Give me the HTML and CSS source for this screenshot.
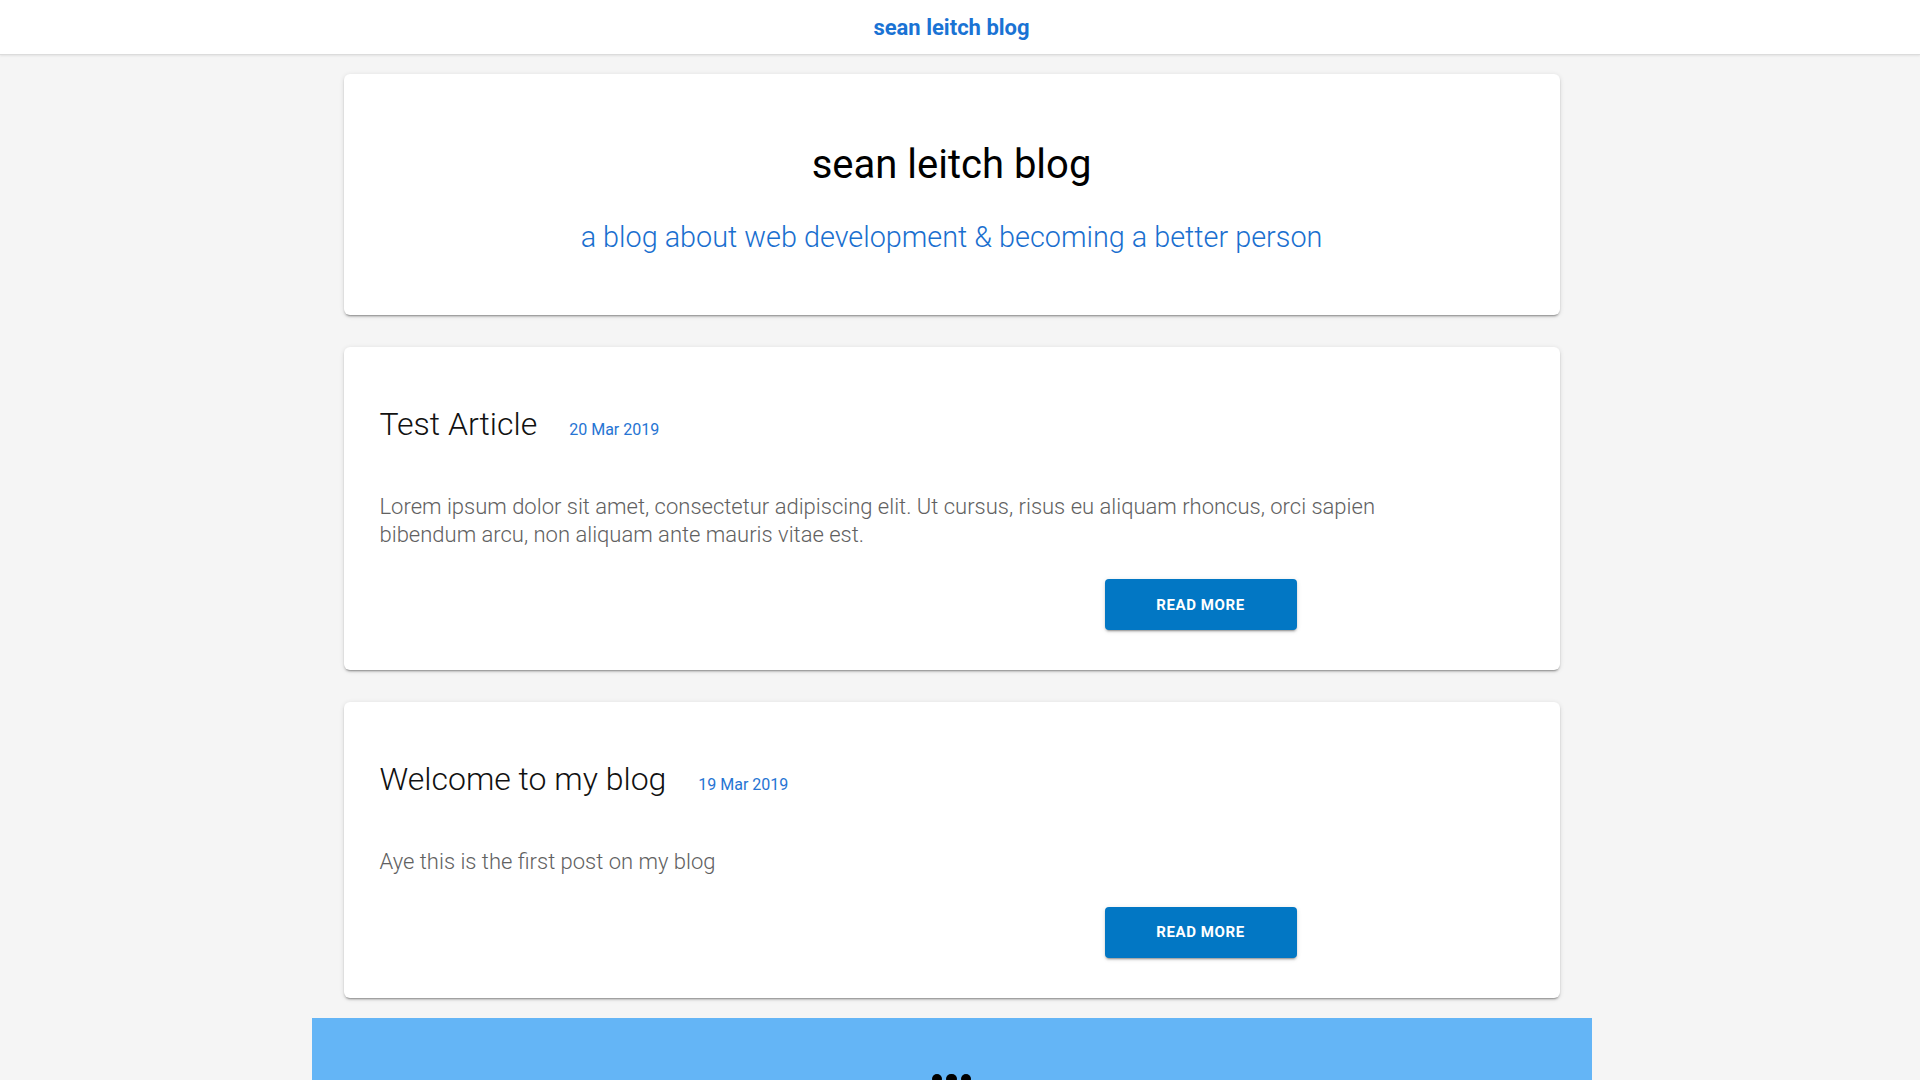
FILE: index.html
```html
<!DOCTYPE html>
<html lang="en">
<head>
<meta charset="utf-8">
<title>sean leitch blog</title>
<link rel="stylesheet" href="styles.css">
</head>
<body>
<header class="topbar">
  <a class="topbar-title" href="#">sean leitch blog</a>
</header>
<main class="content">
  <section class="card hero">
    <h1 class="hero-title">sean leitch blog</h1>
    <p class="hero-sub">a blog about web development &amp; becoming a better person</p>
  </section>
  <article class="card post">
    <div class="post-head">
      <h2 class="post-title">Test Article</h2>
      <span class="post-date">20 Mar 2019</span>
    </div>
    <p class="post-body">Lorem ipsum dolor sit amet, consectetur adipiscing elit. Ut cursus, risus eu aliquam rhoncus, orci sapien bibendum arcu, non aliquam ante mauris vitae est.</p>
    <div class="post-actions">
      <button class="btn">Read more</button>
    </div>
  </article>
  <article class="card post">
    <div class="post-head">
      <h2 class="post-title">Welcome to my blog</h2>
      <span class="post-date">19 Mar 2019</span>
    </div>
    <p class="post-body">Aye this is the first post on my blog</p>
    <div class="post-actions">
      <button class="btn">Read more</button>
    </div>
  </article>
</main>
<footer class="footer">
  <div class="dots"><span></span><span></span><span></span></div>
</footer>
</body>
</html>
```
FILE: styles.css
```css
html, body {
  margin: 0;
  padding: 0;
}
body {
  background: #f5f5f5;
  font-family: Roboto, "Liberation Sans", sans-serif;
  color: #000;
  padding-right: 17px;
}
.topbar {
  height: 54px;
  margin-right: -17px;
  padding-right: 17px;
  background: #fff;
  display: flex;
  align-items: center;
  justify-content: center;
  border-bottom: 1px solid #dcdcdc;
  box-shadow: 0 1px 2px rgba(0,0,0,0.08);
}
.topbar-title {
  font-size: 22px;
  font-weight: 700;
  color: #1a73d4;
  text-decoration: none;
}
.content {
  width: 1216px;
  margin: 19px auto 0;
  display: flex;
  flex-direction: column;
  gap: 32px;
}
.card {
  background: #fff;
  border-radius: 6px;
  box-shadow: 0 3px 1px -2px rgba(0,0,0,0.2), 0 2px 2px 0 rgba(0,0,0,0.14), 0 1px 5px 0 rgba(0,0,0,0.12);
}
.hero {
  padding: 71px 36px 58px;
  text-align: center;
}
.hero-title {
  margin: 0;
  font-size: 40px;
  line-height: 40px;
  font-weight: 400;
  color: #000;
}
.hero-sub {
  margin: 32px 0 0;
  font-size: 28.8px;
  line-height: 40px;
  font-weight: 300;
  color: #1a6fcf;
}
.post {
  padding: 57px 36px 40px;
}
.post-head {
  display: flex;
  align-items: baseline;
  gap: 32px;
  height: 40px;
}
.post-title {
  margin: 0;
  font-size: 32px;
  line-height: 40px;
  font-weight: 300;
  color: #111;
}
.post-date {
  font-size: 16px;
  color: #2674d3;
}
.post-body {
  margin: 49px 0 0;
  max-width: 1060px;
  font-size: 22px;
  line-height: 27.5px;
  font-weight: 300;
  color: #616161;
}
.post-actions {
  width: 917px;
  margin-top: 31px;
  display: flex;
  justify-content: flex-end;
}
.btn {
  width: 192px;
  height: 51px;
  border: 0;
  border-radius: 4px;
  background: #0277c4;
  color: #fff;
  font-family: Roboto, "Liberation Sans", sans-serif;
  font-size: 15px;
  font-weight: 700;
  letter-spacing: 0.6px;
  text-transform: uppercase;
  box-shadow: 0 3px 1px -2px rgba(0,0,0,0.2), 0 2px 2px 0 rgba(0,0,0,0.14), 0 1px 5px 0 rgba(0,0,0,0.12);
  cursor: pointer;
}
.footer {
  width: 1280px;
  height: 200px;
  margin: 20px auto 0;
  background: #64b5f6;
  padding-top: 56px;
  box-sizing: border-box;
}
.dots {
  display: flex;
  justify-content: center;
  gap: 4px;
}
.dots span {
  width: 10.5px;
  height: 10.5px;
  border-radius: 50%;
  background: #000;
}
```
